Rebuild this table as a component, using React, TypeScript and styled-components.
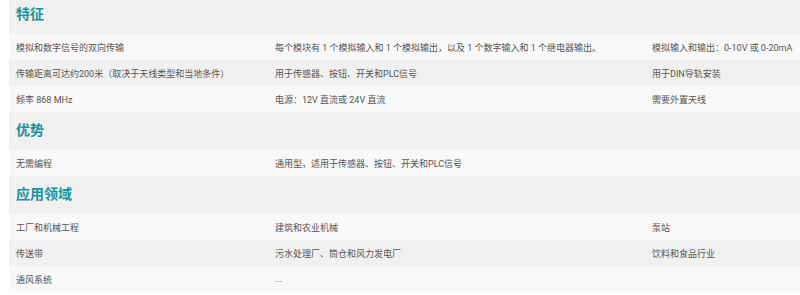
import React from "react";
import styled, { createGlobalStyle } from "styled-components";

const Global = createGlobalStyle`
  html, body { margin: 0; padding: 0; background: #ffffff; }
  body { font-family: Roboto, "Noto Sans CJK SC", sans-serif; }
`;

const Page = styled.div`
  padding-left: 9px;
  margin-top: -4px;
`;

const SectionHeader = styled.div`
  height: 38px;
  background: #f0f0f0;
  display: flex;
  align-items: center;
  padding: 0 7px 4px;
  box-sizing: border-box;
`;

const Title = styled.h2`
  margin: 0;
  font-size: 14px;
  font-weight: 700;
  color: #18929c;
  font-family: "Noto Sans CJK SC", sans-serif;
`;

const Row = styled.div<{ $alt: boolean }>`
  display: grid;
  grid-template-columns: 259px 377px 1fr;
  height: 26px;
  align-items: center;
  background: ${(p) => (p.$alt ? "#f0f0f0" : "#f8f8f8")};
`;

const Cell = styled.div`
  padding-left: 7px;
  font-size: 9px;
  color: #555555;
  white-space: nowrap;
  font-family: Roboto, "Noto Sans CJK SC", sans-serif;
`;

const sections: { title: string; rows: string[][] }[] = [
  {
    title: "特征",
    rows: [
      [
        "模拟和数字信号的双向传输",
        "每个模块有 1 个模拟输入和 1 个模拟输出，以及 1 个数字输入和 1 个继电器输出。",
        "模拟输入和输出：0-10V 或 0-20mA",
      ],
      ["传输距离可达约200米（取决于天线类型和当地条件）", "用于传感器、按钮、开关和PLC信号", "用于DIN导轨安装"],
      ["频率 868 MHz", "电源：12V 直流或 24V 直流", "需要外置天线"],
    ],
  },
  {
    title: "优势",
    rows: [["无需编程", "通用型，适用于传感器、按钮、开关和PLC信号", ""]],
  },
  {
    title: "应用领域",
    rows: [
      ["工厂和机械工程", "建筑和农业机械", "泵站"],
      ["传送带", "污水处理厂、筒仓和风力发电厂", "饮料和食品行业"],
      ["通风系统", "...", ""],
    ],
  },
];

export default function App() {
  return (
    <>
      <Global />
      <Page>
        {sections.map((s) => (
          <section key={s.title}>
            <SectionHeader>
              <Title>{s.title}</Title>
            </SectionHeader>
            {s.rows.map((r, i) => (
              <Row key={i} $alt={i % 2 === 1}>
                {r.map((c, j) => (
                  <Cell key={j}>{c}</Cell>
                ))}
              </Row>
            ))}
          </section>
        ))}
      </Page>
    </>
  );
}
